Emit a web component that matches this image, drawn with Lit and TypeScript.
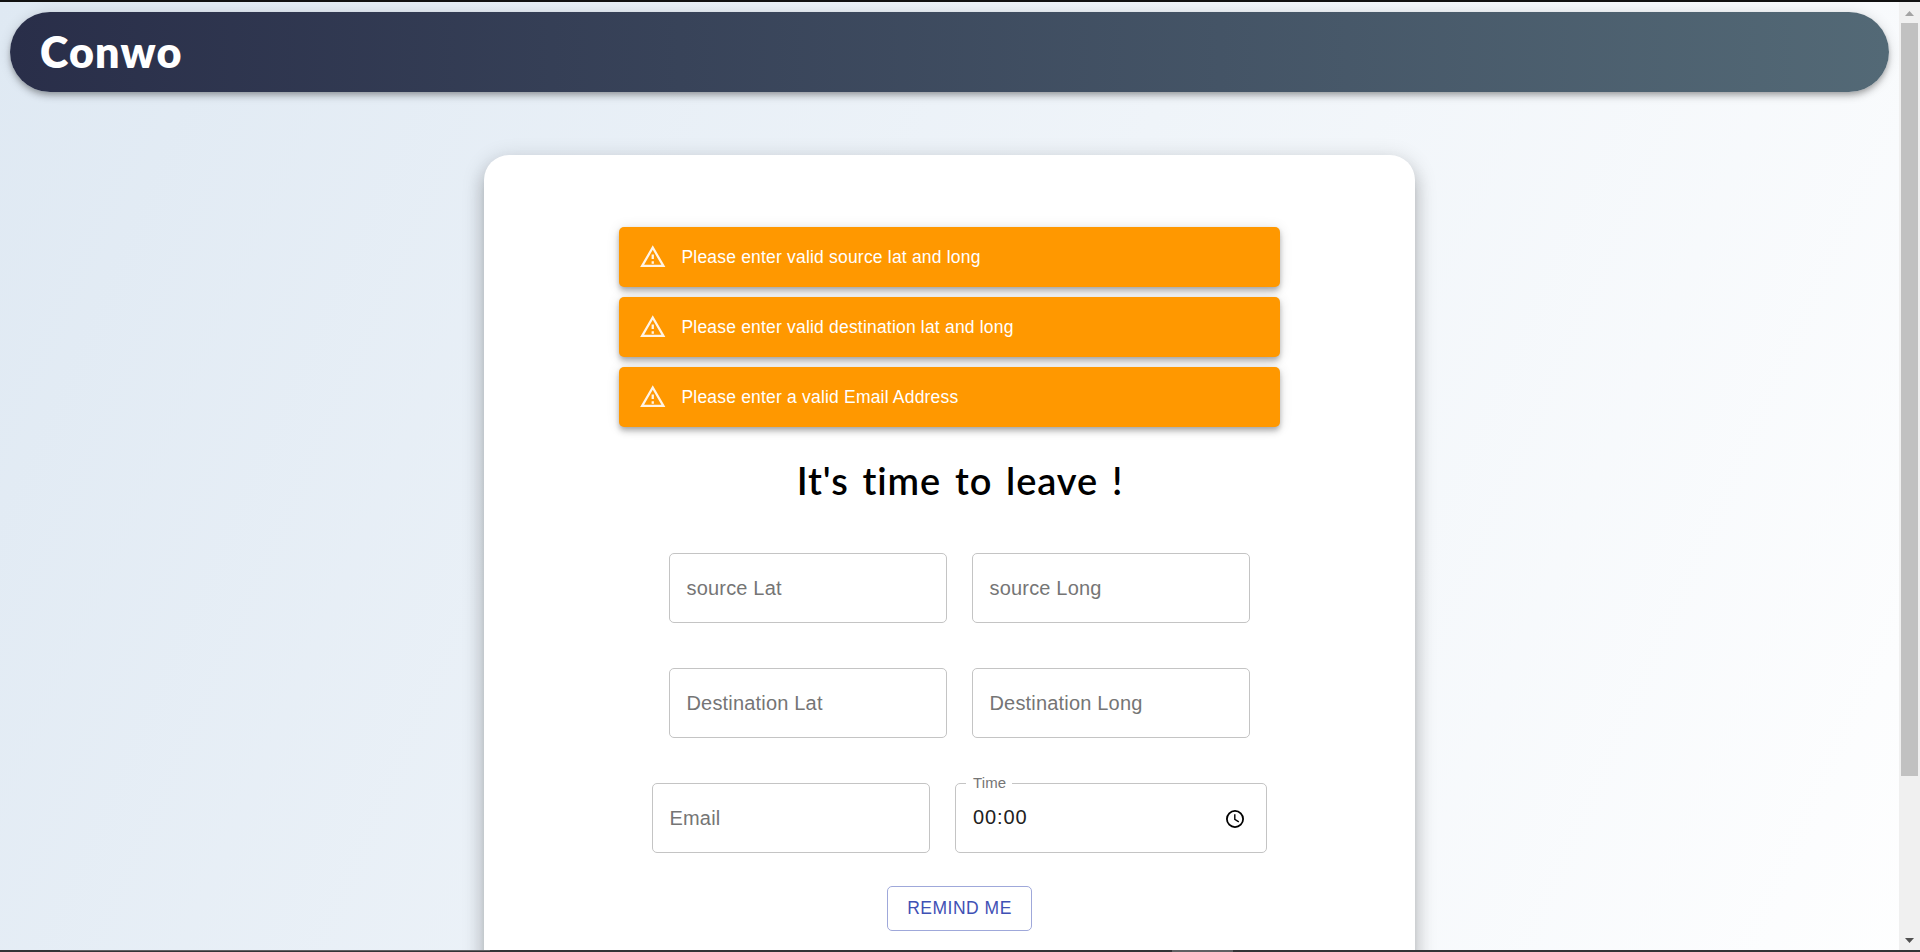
import { LitElement, html, css } from "lit";
import { customElement, property } from "lit/decorators.js";

@customElement("warning-alert")
class WarningAlert extends LitElement {
  static styles = css`
    :host {
      display: flex;
      align-items: center;
      box-sizing: border-box;
      height: 60px;
      padding: 0 20px;
      border-radius: 5px;
      background: #ff9800;
      color: #fff;
      box-shadow: 0 2.5px 5px -1px rgba(0, 0, 0, 0.2), 0 5px 6px 0 rgba(0, 0, 0, 0.14),
        0 1px 12.5px 0 rgba(0, 0, 0, 0.12);
      font: 500 17.5px/25px "Liberation Sans", Arial, sans-serif;
      letter-spacing: 0.19px;
    }
    .icon {
      width: 27.5px;
      height: 27.5px;
      margin-right: 15px;
      fill: currentColor;
      opacity: 0.9;
    }
  `;
  render() {
    return html`<svg class="icon" viewBox="0 0 24 24">
        <path d="M12 5.99L19.53 19H4.47L12 5.99M12 2L1 21h22L12 2zm1 14h-2v2h2v-2zm0-6h-2v4h2v-4z" />
      </svg>
      <span><slot></slot></span>`;
  }
}

@customElement("outlined-field")
class OutlinedField extends LitElement {
  @property() label = "";
  static styles = css`
    :host {
      display: flex;
      align-items: center;
      box-sizing: border-box;
      width: 278px;
      height: 70px;
      padding: 0 16.5px;
      border: 1px solid #c4c4c4;
      border-radius: 5px;
      color: #757575;
      font: 20px/24px "Liberation Sans", Arial, sans-serif;
      letter-spacing: 0.18px;
    }
  `;
  render() {
    return html`<span>${this.label}</span>`;
  }
}

@customElement("time-field")
class TimeField extends LitElement {
  static styles = css`
    :host {
      display: flex;
      align-items: center;
      justify-content: space-between;
      position: relative;
      box-sizing: border-box;
      width: 312px;
      height: 70px;
      padding: 0 21px 0 17px;
      border: 1px solid #c4c4c4;
      border-radius: 5px;
      color: #212121;
      font: 20px/24px "Liberation Sans", Arial, sans-serif;
    }
    .label {
      position: absolute;
      left: 10px;
      top: -10px;
      padding: 0 6px 0 7px;
      background: #fff;
      color: #757575;
      font-size: 15px;
      line-height: 18px;
      letter-spacing: 0.14px;
    }
    .value {
      letter-spacing: 0.9px;
      padding-bottom: 2px;
    }
    .clock {
      width: 20px;
      height: 20px;
      margin-top: 2px;
      fill: none;
      stroke: #000;
    }
  `;
  render() {
    return html`<span class="label">Time</span><span class="value">00:00</span>
      <svg class="clock" viewBox="0 0 20 20">
        <circle cx="10" cy="10" r="8.1" stroke-width="1.8" />
        <path d="M9.8 5.2V10.4L13.8 12.8" stroke-width="1.4" />
      </svg>`;
  }
}

@customElement("app-root")
class AppRoot extends LitElement {
  static styles = css`
    :host {
      display: flex;
      flex-direction: column;
      height: 952px;
      overflow: hidden;
      font-family: "Liberation Sans", Arial, sans-serif;
    }
    .edge-top {
      flex: 0 0 2px;
      background: #111;
    }
    .edge-bottom {
      flex: 0 0 2px;
      display: flex;
      background: #333336;
    }
    .tab {
      box-sizing: border-box;
      width: 430px;
      margin-left: 60px;
      border-top: 1px solid #606063;
    }
    .tab-active {
      width: 61px;
      margin-left: 682px;
      background: #606063;
    }
    .window {
      flex: 1;
      min-height: 0;
      display: flex;
    }
    .page {
      flex: 1;
      overflow: hidden;
      background: linear-gradient(114deg, #dfe9f3 0%, #fff 100%) 0 0 / 100% 1152px no-repeat;
    }
    .nav {
      display: flex;
      align-items: center;
      box-sizing: border-box;
      height: 80px;
      margin: 10px 10px 63px;
      padding: 0 30px;
      border-radius: 40px;
      background: linear-gradient(to right, #292e49, #536976);
      box-shadow: 0 2.5px 5px -1px rgba(0, 0, 0, 0.2), 0 5px 6px 0 rgba(0, 0, 0, 0.14),
        0 1px 12.5px 0 rgba(0, 0, 0, 0.12);
    }
    .brand {
      color: #fff;
      font: 800 43px/52px Lato, sans-serif;
      letter-spacing: 1.2px;
    }
    .card {
      display: flex;
      flex-direction: column;
      align-items: center;
      box-sizing: border-box;
      width: 931px;
      height: 980px;
      margin: 0 auto;
      padding: 72px 135px 0;
      border-radius: 25px;
      background: #fff;
      box-shadow: 0 7.5px 7.5px -4px rgba(0, 0, 0, 0.2), 0 12.5px 17.5px 1px rgba(0, 0, 0, 0.14),
        0 5px 20px 4px rgba(0, 0, 0, 0.12);
    }
    .alerts {
      display: flex;
      flex-direction: column;
      gap: 10px;
      width: 100%;
    }
    .form {
      display: flex;
      flex-direction: column;
      align-items: center;
      margin-left: 20px;
    }
    .title {
      margin: 27px 0 46px;
      color: #000;
      font: 600 38px/53px Lato, sans-serif;
      letter-spacing: 0.9px;
      word-spacing: 3.5px;
      padding-left: 1px;
      white-space: nowrap;
    }
    .row {
      display: flex;
      gap: 25px;
      margin-bottom: 45px;
    }
    .last {
      margin-bottom: 33px;
    }
    .submit {
      box-sizing: border-box;
      width: 145px;
      height: 45px;
      padding: 0 0 2px;
      border: 1px solid #9fa8da;
      border-radius: 5px;
      background: #fff;
      color: #3f51b5;
      font: 500 17.5px/30px "Liberation Sans", Arial, sans-serif;
      letter-spacing: 0.5px;
      white-space: nowrap;
    }
    .scrollbar {
      display: flex;
      flex-direction: column;
      align-items: center;
      justify-content: space-between;
      box-sizing: border-box;
      width: 21px;
      padding: 9px 0 7px;
      background: #f0f0f0;
    }
    .thumb {
      width: 17px;
      height: 753px;
      margin: 7px 0 auto;
      background: #c1c1c1;
    }
    .arrow {
      width: 9px;
      height: 5px;
      fill: #a3a3a3;
    }
    .down {
      fill: #505050;
    }
  `;
  render() {
    return html`
      <div class="edge-top"></div>
      <div class="window">
        <main class="page">
          <header class="nav"><span class="brand">Conwo</span></header>
          <section class="card">
            <div class="alerts">
              <warning-alert>Please enter valid source lat and long</warning-alert>
              <warning-alert>Please enter valid destination lat and long</warning-alert>
              <warning-alert>Please enter a valid Email Address</warning-alert>
            </div>
            <div class="form">
              <h1 class="title">It's time to leave !</h1>
              <div class="row">
                <outlined-field label="source Lat"></outlined-field>
                <outlined-field label="source Long"></outlined-field>
              </div>
              <div class="row">
                <outlined-field label="Destination Lat"></outlined-field>
                <outlined-field label="Destination Long"></outlined-field>
              </div>
              <div class="row last">
                <outlined-field label="Email"></outlined-field>
                <time-field></time-field>
              </div>
              <button class="submit">REMIND ME</button>
            </div>
          </section>
        </main>
        <div class="scrollbar">
          <svg class="arrow" viewBox="0 0 9 5"><path d="M4.5 0L9 5H0z" /></svg>
          <div class="thumb"></div>
          <svg class="arrow down" viewBox="0 0 9 5"><path d="M0 0H9L4.5 5z" /></svg>
        </div>
      </div>
      <div class="edge-bottom"><div class="tab"></div><div class="tab-active"></div></div>
    `;
  }
}
